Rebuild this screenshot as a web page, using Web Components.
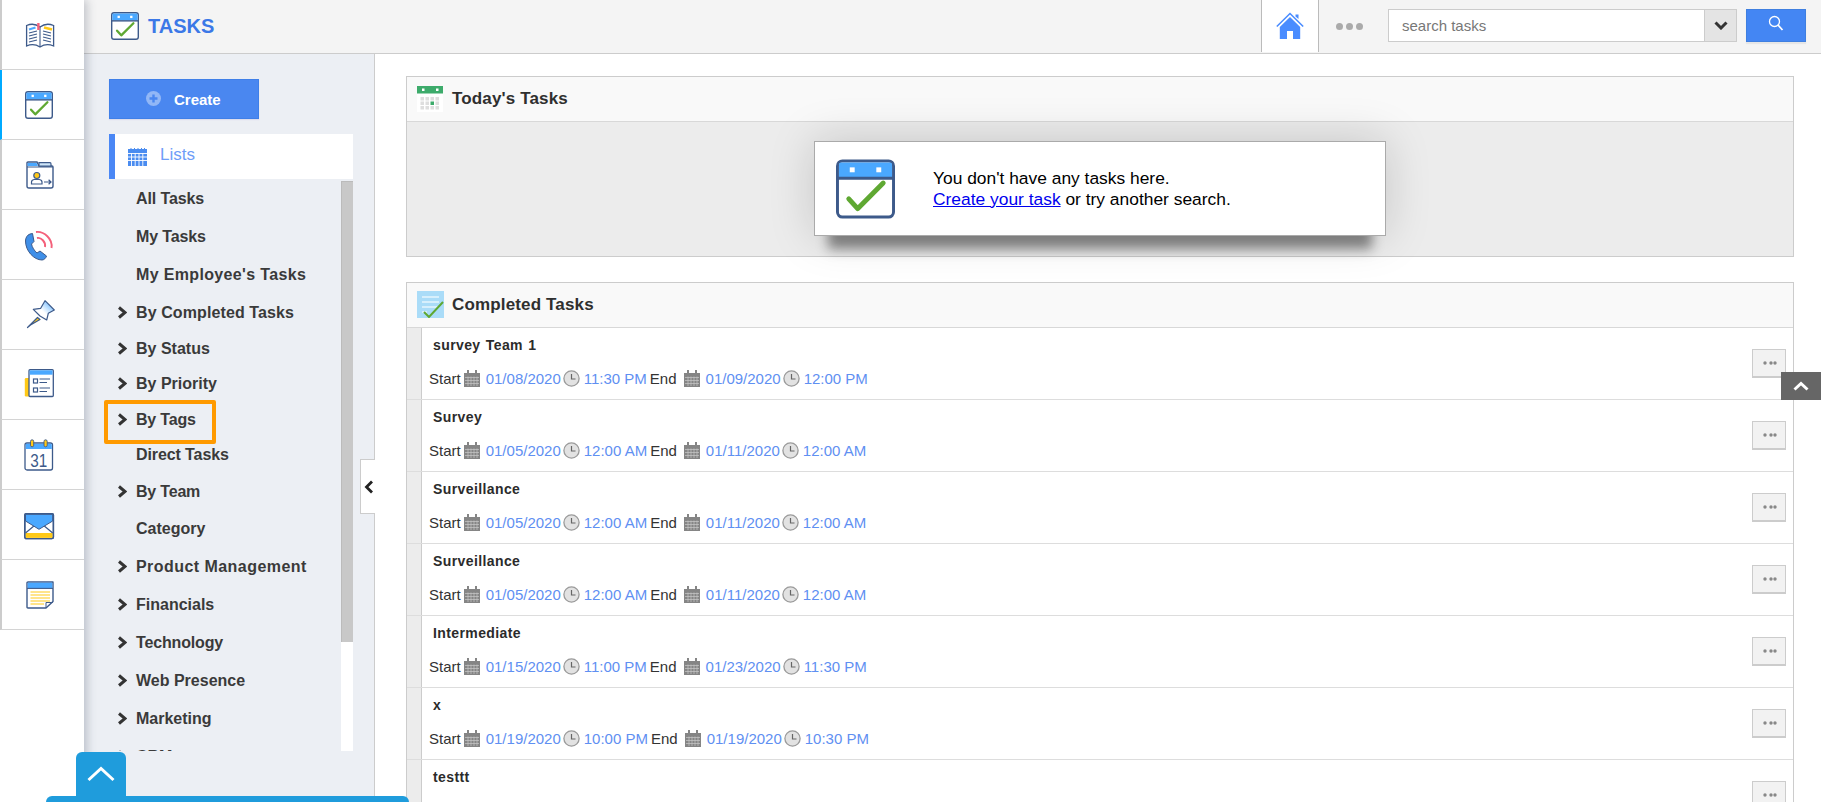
<!DOCTYPE html>
<html>
<head>
<meta charset="utf-8">
<title>Tasks</title>
<style>
  html, body { margin: 0; height: 100%; overflow: hidden; background: #fff; font-family: "Liberation Sans", Arial, sans-serif; }
</style>
</head>
<body>
<app-shell>
  <app-rail slot="rail">
    <rail-item icon="book"></rail-item>
    <rail-item icon="tasks" active></rail-item>
    <rail-item icon="folder"></rail-item>
    <rail-item icon="phone"></rail-item>
    <rail-item icon="pin"></rail-item>
    <rail-item icon="news"></rail-item>
    <rail-item icon="cal31"></rail-item>
    <rail-item icon="mail"></rail-item>
    <rail-item icon="note"></rail-item>
  </app-rail>
  <top-bar slot="top"></top-bar>
  <side-panel slot="side">
    <side-item h="37" ls="-.1">All Tasks</side-item>
    <side-item h="39" ls="-.15">My Tasks</side-item>
    <side-item h="38" ls=".35">My Employee's Tasks</side-item>
    <side-item h="37" ls=".1" arrow>By Completed Tasks</side-item>
    <side-item h="35" ls="0" arrow>By Status</side-item>
    <side-item h="36" ls="0" arrow>By Priority</side-item>
    <side-item h="35" ls="-.2" arrow>By Tags</side-item>
    <side-item h="36" ls="-.1">Direct Tasks</side-item>
    <side-item h="38" ls="-.2" arrow>By Team</side-item>
    <side-item h="36" ls="0">Category</side-item>
    <side-item h="39" ls=".45" arrow>Product Management</side-item>
    <side-item h="38" ls="0" arrow>Financials</side-item>
    <side-item h="38" ls="-.15" arrow>Technology</side-item>
    <side-item h="38" ls="0" arrow>Web Presence</side-item>
    <side-item h="38" ls="0" arrow>Marketing</side-item>
    <side-item h="38" ls="0" arrow>CRM</side-item>
  </side-panel>
  <div slot="main" style="padding:22px 27px 0 31px">
    <task-panel heading="Today's Tasks" icon="today">
      <empty-card>
        You don't have any tasks here.<br>
        <a href="#" style="color:#0000ee">Create your task</a> or try another search.
      </empty-card>
    </task-panel>
    <task-panel heading="Completed Tasks" icon="done" style="margin-top:25px" list>
      <task-row name="survey Team 1" d1="01/08/2020" t1="11:30 PM" d2="01/09/2020" t2="12:00 PM"></task-row>
      <task-row name="Survey" d1="01/05/2020" t1="12:00 AM" d2="01/11/2020" t2="12:00 AM"></task-row>
      <task-row name="Surveillance" d1="01/05/2020" t1="12:00 AM" d2="01/11/2020" t2="12:00 AM"></task-row>
      <task-row name="Surveillance" d1="01/05/2020" t1="12:00 AM" d2="01/11/2020" t2="12:00 AM"></task-row>
      <task-row name="Intermediate" d1="01/15/2020" t1="11:00 PM" d2="01/23/2020" t2="11:30 PM"></task-row>
      <task-row name="x" d1="01/19/2020" t1="10:00 PM" d2="01/19/2020" t2="10:30 PM"></task-row>
      <task-row name="testtt"></task-row>
    </task-panel>
  </div>
</app-shell>

<script>
const NAVY = "#3d5a8a", SKY = "#4aa8ff", SUN = "#ffc917", ROSE = "#f4607a", LEAF = "#5fa832";

const ICONS = {
  book: `<svg viewBox="0 0 32 32" width="32" height="32" fill="none" stroke="${NAVY}" stroke-width="1.1">
    <path d="M16 8C12 5 7 4.6 2.6 6.5V27C7 25 12 25.4 16 28C20 25.4 25 25 29.6 27V6.5C25 4.6 20 5 16 8Z" fill="#fff" stroke-width="1.3"/>
    <path d="M16 8V28"/>
    <path d="M5 10.5 11.5 8.5" stroke="${SKY}" stroke-width="2.2"/>
    <path d="M20 8.5 28 10.5" stroke="${SUN}" stroke-width="2.4"/>
    <path d="M5 14 13 12M5 17 13 15M5 20 13 18M5 23 13 21M19 12 27 14M19 15 27 17M19 18 27 20M19 21 27 23"/>
    <path d="M14.4 4V11" stroke="${ROSE}" stroke-width="2.4"/>
  </svg>`,
  tasks: `<svg viewBox="0 0 60 60" width="100%" height="100%">
    <rect x="1.5" y="1.5" width="57" height="57" rx="5" fill="#fff" stroke="${NAVY}" stroke-width="3"/>
    <path d="M3 18V5Q3 3 5 3H55Q57 3 57 5V18Z" fill="${SKY}"/>
    <path d="M2 19H58" stroke="${NAVY}" stroke-width="3"/>
    <rect x="14" y="8" width="5" height="5" fill="#fff"/><rect x="41" y="8" width="5" height="5" fill="#fff"/>
    <path d="M13 40 22 50 48 24" fill="none" stroke="${LEAF}" stroke-width="5" stroke-linecap="round" stroke-linejoin="round"/>
  </svg>`,
  folder: `<svg viewBox="0 0 32 32" width="32" height="32" fill="none" stroke="${NAVY}" stroke-width="1.2">
    <path d="M3 4Q3 3 4 3H13L15 7H28Q29 7 29 8V27Q29 29 27 29H5Q3 29 3 27Z" fill="#fff" stroke-width="1.4"/>
    <path d="M3.6 7V4H12.6L14 7Z" fill="${SKY}" stroke="none"/>
    <path d="M15 7V3.6H26Q27 3.6 27 5V7Z" fill="#cfe6f8"/>
    <path d="M3 8H29" stroke-width="1"/>
    <path d="M7.5 25V23Q7.5 21 10 20.5H15.5Q18 21 18 23V25Z" fill="#fff"/>
    <circle cx="12.8" cy="16.5" r="3" fill="${SUN}"/>
    <path d="M20 23H27M24.6 20.8 27 23 24.6 25.2"/>
  </svg>`,
  phone: `<svg viewBox="0 0 32 32" width="32" height="32" fill="none">
    <path d="M6 5C3 6 1.5 9 1.5 12C1.5 22 10 31 18 31C20 31 22 29 22.5 27L16 22L13 24C10.5 22 8 18 7.5 15L10 12.5L8.5 4.5Z" fill="#3f8fe8" stroke="${NAVY}" stroke-width="1"/>
    <path d="M12 3C20 2 29 10 27.5 19" stroke="${ROSE}" stroke-width="1.9"/>
    <path d="M13 9C17 8 22 13 21 18" stroke="${ROSE}" stroke-width="1.9"/>
  </svg>`,
  pin: `<svg viewBox="0 0 32 32" width="32" height="32" fill="none" stroke="${NAVY}" stroke-width="1.2" stroke-linejoin="round">
    <defs><linearGradient id="pinfill" x1="0" y1="1" x2="1" y2="0"><stop offset=".45" stop-color="#fff"/><stop offset="1" stop-color="${SKY}"/></linearGradient></defs>
    <path d="M13.5 18.5 3.5 28.5 6.5 26 16 20.5Z" fill="${SUN}"/>
    <path d="M21 1.7 30.3 11 24.3 14.3 22.7 21 16 17 9.3 10.3 16.7 9.3Z" fill="url(#pinfill)"/>
  </svg>`,
  news: `<svg viewBox="0 0 32 32" width="32" height="32" fill="none" stroke="${NAVY}" stroke-width="1.2">
    <rect x=".8" y="9" width="5" height="18.5" rx="1.2" fill="${SUN}" stroke="none"/>
    <rect x="5" y=".7" width="24.3" height="26.8" rx="1" fill="#fff" stroke-width="1.3"/>
    <rect x="5.6" y="1.3" width="23" height="4.4" fill="${SKY}" stroke="none"/>
    <rect x="9.5" y="10" width="4" height="4"/><rect x="9.5" y="19" width="4" height="4"/>
    <path d="M15.5 10H26M15.5 13.5H23M15.5 19H26M15.5 22.5H23"/>
  </svg>`,
  cal31: `<svg viewBox="0 0 32 32" width="32" height="32" fill="none">
    <rect x="1" y="4" width="27.5" height="27" rx="2" fill="#fff" stroke="${NAVY}" stroke-width="1.3"/>
    <path d="M1.7 10V5Q1.7 4.7 3 4.7H26.5Q27.8 4.7 27.8 6V10Z" fill="${SKY}"/>
    <rect x="6.5" y=".8" width="3.2" height="7" rx="1.6" fill="${SUN}" stroke="${NAVY}" stroke-width=".9"/>
    <rect x="20" y=".8" width="3.2" height="7" rx="1.6" fill="${SUN}" stroke="${NAVY}" stroke-width=".9"/>
    <text x="6.3" y="27.8" textLength="17" lengthAdjust="spacingAndGlyphs" font-family="Liberation Sans" font-size="18" fill="${NAVY}">31</text>
  </svg>`,
  mail: `<svg viewBox="0 0 32 32" width="32" height="32" fill="none" stroke="${NAVY}">
    <rect x=".8" y="4.6" width="28.6" height="25" rx="1.5" fill="#fff" stroke-width="1.4"/>
    <path d="M1.5 24H28.7V28.9H1.5Z" fill="${SUN}" stroke="none"/>
    <path d="M1.5 24 10.5 16.5M28.7 24 19.7 16.5" stroke-width="1.2"/>
    <path d="M1.5 5.3H28.7V12L15 20.3 1.5 12Z" fill="${SKY}" stroke-width="1"/>
    <rect x=".8" y="4.6" width="28.6" height="25" rx="1.5" stroke-width="1.4"/>
  </svg>`,
  note: `<svg viewBox="0 0 32 32" width="32" height="32" fill="none" stroke="${NAVY}">
    <path d="M3 4Q3 3 4 3H29V22.5L22 29H4Q3 29 3 28Z" fill="#fff" stroke-width="1.4" stroke-linejoin="round"/>
    <path d="M3.7 3.7H28.3V9H3.7Z" fill="${SKY}" stroke="none"/>
    <path d="M3 9.4H29" stroke-width="1.1"/>
    <path d="M6.5 13H26M6.5 16H26M6.5 19H26M6.5 22H26M6.5 25H20" stroke="${SUN}" stroke-width="1.2"/>
    <path d="M22 29V23.5H29" stroke-width="1"/>
  </svg>`,
  today: `<svg viewBox="0 0 26 26" width="26" height="26">
    <rect width="26" height="26" fill="#fff"/>
    <rect width="26" height="7.5" fill="#3dab6b"/>
    <rect x="5" y="2.5" width="2.5" height="2.5" fill="#fff"/><rect x="19" y="2.5" width="2.5" height="2.5" fill="#fff"/>
    <g fill="#dedede">
      <rect x="3.5" y="11" width="3.5" height="3.5"/><rect x="8.5" y="11" width="3.5" height="3.5"/><rect x="13.5" y="11" width="3.5" height="3.5"/><rect x="18.5" y="11" width="3.5" height="3.5"/>
      <rect x="3.5" y="15.5" width="3.5" height="3.5"/><rect x="8.5" y="15.5" width="3.5" height="3.5"/><rect x="18.5" y="15.5" width="3.5" height="3.5"/>
      <rect x="3.5" y="20" width="3.5" height="3.5"/><rect x="8.5" y="20" width="3.5" height="3.5"/><rect x="13.5" y="20" width="3.5" height="3.5"/><rect x="18.5" y="20" width="3.5" height="3.5"/>
    </g>
    <rect x="13.5" y="15.5" width="3.5" height="3.5" fill="#3dab6b"/>
  </svg>`,
  done: `<svg viewBox="0 0 27 27" width="27" height="27">
    <rect width="27" height="27" fill="#aadcf8"/>
    <path d="M5 6H22M5 11H22M5 16H22M5 21H10" stroke="#e6f5fd" stroke-width="1.4"/>
    <path d="M7 21 12 26 26 11" fill="none" stroke="${LEAF}" stroke-width="2"/>
  </svg>`,
  home: `<svg viewBox="0 0 28 28" width="28" height="28" fill="#4a8cff">
    <path d="M.8 14.5 14 1.5 27.2 14.5" fill="none" stroke="#4a8cff" stroke-width="1.6"/>
    <path d="M19.5 2.5H22.5V7L19.5 4.5Z"/>
    <path d="M3.8 15 14 5 24.2 15V27H17V19H11V27H3.8Z"/>
  </svg>`,
  lists: `<svg viewBox="0 0 19 18" width="19" height="18">
    <rect y="1" width="19" height="17" fill="#4a8cf0"/>
    <path d="M3 0V2M6.5 0V2M10 0V2M13.5 0V2M16.5 0V2" stroke="#4a8cf0"/>
    <path d="M0 5.5H19M0 9H19M0 12.5H19M3.5 5V18M7.2 5V18M11 5V18M14.8 5V18" stroke="#fff" stroke-width=".9"/>
  </svg>`,
  cal: `<svg viewBox="0 0 16 17" width="16" height="17">
    <rect y="3" width="16" height="14" fill="#858585"/>
    <rect x="3" y="0" width="2" height="5" fill="#858585"/><rect x="11" y="0" width="2" height="5" fill="#858585"/>
    <path d="M1 7.5H15M1 10.5H15M1 13.5H15M4 6.5V16M7 6.5V16M10 6.5V16M13 6.5V16" stroke="#c9c9c9" stroke-width=".7"/>
  </svg>`,
  clock: `<svg viewBox="0 0 17 17" width="17" height="17" fill="none">
    <circle cx="8.5" cy="8.5" r="7.6" fill="#e2e2e2" stroke="#9a9a9a" stroke-width="1.3"/>
    <path d="M8.5 4V9H12.5" stroke="#666" stroke-width="1.2"/>
  </svg>`,
  chevRight: `<svg viewBox="0 0 10 13" width="10" height="13" fill="none">
    <path d="M2 1.5 8 6.5 2 11.5" stroke="#333" stroke-width="3"/>
  </svg>`
};

class AppIcon extends HTMLElement {
  connectedCallback() {
    this.attachShadow({ mode: "open" }).innerHTML = `
      <style>:host { display: block; line-height: 0; flex: none; }</style>
      ${ICONS[this.getAttribute("name")]}`;
  }
}
customElements.define("app-icon", AppIcon);

class AppShell extends HTMLElement {
  constructor() {
    super();
    this.attachShadow({ mode: "open" }).innerHTML = `
      <style>
        :host { display: grid; grid-template-columns: 84px 1fr; grid-template-rows: 54px 1fr; height: 802px; position: relative; overflow: hidden; }
        .rail { grid-row: 1 / 3; position: relative; z-index: 3; }
        .top { grid-column: 2; position: relative; z-index: 1; }
        .body { grid-column: 2; display: flex; min-height: 0; }
        .main { flex: 1; min-width: 0; overflow: hidden; }
        .to-top { position: absolute; left: 1781px; top: 372px; width: 40px; height: 28px; background: #666; display: flex; align-items: center; justify-content: center; z-index: 4; }
        .dock { position: absolute; left: 46px; top: 796px; width: 363px; height: 6px; background: #1f9cdc; border-radius: 6px 6px 0 0; z-index: 5; }
        .dock-tab { position: absolute; left: 76px; top: 752px; width: 50px; height: 44px; background: #1f9cdc; border-radius: 6px 6px 0 0; z-index: 5; display: flex; align-items: center; justify-content: center; }
      </style>
      <div class="rail"><slot name="rail"></slot></div>
      <div class="top"><slot name="top"></slot></div>
      <div class="body">
        <slot name="side"></slot>
        <div class="main"><slot name="main"></slot></div>
      </div>
      <div class="to-top"><svg viewBox="0 0 16 10" width="16" height="10" fill="none"><path d="M1.5 8.5 8 2.5 14.5 8.5" stroke="#fff" stroke-width="3"/></svg></div>
      <div class="dock-tab"><svg viewBox="0 0 28 16" width="28" height="16" fill="none"><path d="M1.5 14 14 2.5 26.5 14" stroke="#fff" stroke-width="3"/></svg></div>
      <div class="dock"></div>`;
  }
}
customElements.define("app-shell", AppShell);

class AppRail extends HTMLElement {
  constructor() {
    super();
    this.attachShadow({ mode: "open" }).innerHTML = `
      <style>:host { display: block; width: 84px; height: 802px; background: #fff; box-shadow: 3px 0 9px rgba(60,70,90,.28); }</style>
      <slot></slot>`;
  }
}
customElements.define("app-rail", AppRail);

class RailItem extends HTMLElement {
  connectedCallback() {
    const color = this.hasAttribute("active") ? "#00aaff" : "#cccccc";
    this.attachShadow({ mode: "open" }).innerHTML = `
      <style>
        :host { display: flex; box-sizing: border-box; height: 70px; align-items: center; justify-content: center;
                border-left: 2px solid ${color}; border-bottom: 1px solid #d4d4d4; padding: 1px 6px 0 0; background: #fff; }
        app-icon { width: 32px; height: 32px; }
        .tasks { width: 28px; height: 28px; margin: 0 1px 0 -1px; }
      </style>
      <app-icon name="${this.getAttribute("icon")}" class="${this.getAttribute("icon")}"></app-icon>`;
  }
}
customElements.define("rail-item", RailItem);

class TopBar extends HTMLElement {
  constructor() {
    super();
    this.attachShadow({ mode: "open" }).innerHTML = `
      <style>
        :host { display: flex; box-sizing: border-box; height: 54px; background: #f4f4f4; border-bottom: 1px solid #ccc; padding-left: 27px; }
        .logo { width: 28px; height: 28px; align-self: center; margin-top: -1px; }
        h1 { margin: 0 0 0 9px; align-self: center; font-size: 20px; font-weight: bold; color: #3b78e7; margin-top: -1px; }
        .home { margin-left: auto; width: 58px; height: 52px; box-sizing: border-box; background: #fff; border: solid #bbb; border-width: 0 1px; display: flex; align-items: center; justify-content: center; padding-bottom: 1px; }
        .dots { margin: -1px 25px 0 17px; display: flex; gap: 3px; align-items: center; }
        .dots i { width: 7px; height: 7px; border-radius: 50%; background: #aaa; }
        .search { box-sizing: border-box; width: 349px; height: 33px; margin-top: 9px; background: #fff; border: 1px solid #ccc; display: flex; }
        .search span { flex: 1; padding-left: 13px; font-size: 15px; line-height: 32px; color: #777; }
        .drop { width: 31px; background: #e4e4e4; border-left: 1px solid #ccc; display: flex; align-items: center; justify-content: center; }
        .go { box-sizing: border-box; width: 60px; height: 33px; margin: 9px 15px 0 9px; background: #4486f3; border: 1px solid #3f7fe0; box-shadow: 0 2px 1px #e6e6e6; display: flex; align-items: center; justify-content: center; padding-bottom: 5px; }
      </style>
      <app-icon class="logo" name="tasks"></app-icon>
      <h1>TASKS</h1>
      <div class="home"><app-icon name="home"></app-icon></div>
      <div class="dots"><i></i><i></i><i></i></div>
      <div class="search">
        <span>search tasks</span>
        <div class="drop"><svg viewBox="0 0 14 9" width="14" height="9" fill="none"><path d="M1.5 1.5 7 7 12.5 1.5" stroke="#333" stroke-width="3"/></svg></div>
      </div>
      <div class="go"><svg viewBox="0 0 16 16" width="16" height="16" fill="none" stroke="#fff"><circle cx="6.5" cy="6.5" r="5" stroke-width="1.3"/><path d="M10 10 14.5 15" stroke-width="1.8"/></svg></div>`;
  }
}
customElements.define("top-bar", TopBar);

class SidePanel extends HTMLElement {
  constructor() {
    super();
    this.attachShadow({ mode: "open" }).innerHTML = `
      <style>
        :host { display: block; flex: none; box-sizing: border-box; width: 291px; height: 748px; position: relative; background: #eceff4; border-right: 1px solid #ccc; padding: 25px 0 0 25px; }
        .create { box-sizing: border-box; width: 150px; height: 40px; background: #4a87f0; border: 1px solid #3f7fe8; color: #fff; font-weight: bold; font-size: 15px; display: flex; align-items: center; padding: 1px 0 0 36px; gap: 13px; box-shadow: 0 1px 1px #dde; }
        .create svg { margin-top: -2px; }
        .lists { box-sizing: border-box; width: 244px; height: 45px; margin-top: 15px; background: #fff; border-left: 6px solid #4a87f5; display: flex; align-items: center; padding: 0 0 3px 13px; font-size: 17px; color: #6f9df8; gap: 13px; }
        .lists app-icon { margin-top: 3px; }
        .wrap { width: 244px; height: 570px; margin-top: 2px; display: flex; overflow: hidden; }
        .items { flex: 1; min-width: 0; margin-top: -1px; }
        .scroll { width: 12px; height: 570px; background: #fff; flex: none; }
        .scroll div { height: 461px; background: #c8c8c8; border: solid #bbb; border-width: 1px 0 0 1px; box-sizing: border-box; }
        .mark { position: absolute; left: 20px; top: 346px; width: 112px; height: 44px; box-sizing: border-box; border: 4px solid #ff9a00; border-radius: 2px; }
        .fold { position: absolute; left: 276px; top: 405px; width: 15px; height: 55px; box-sizing: border-box; background: #fff; border: 1px solid #ccc; border-right: 0; display: flex; align-items: center; justify-content: center; padding-left: 2px; }
      </style>
      <div class="create">
        <svg viewBox="0 0 15 15" width="15" height="15"><circle cx="7.5" cy="7.5" r="7.5" fill="#fff" opacity=".4"/><path d="M7.5 3.5V11.5M3.5 7.5H11.5" stroke="#4a87f0" stroke-width="2.4"/></svg>
        <span>Create</span>
      </div>
      <div class="lists"><app-icon name="lists"></app-icon><span>Lists</span></div>
      <div class="wrap">
        <div class="items"><slot></slot></div>
        <div class="scroll"><div></div></div>
      </div>
      <div class="mark"></div>
      <div class="fold"><svg viewBox="0 0 10 14" width="10" height="14" fill="none"><path d="M8 1.5 2.5 7 8 12.5" stroke="#222" stroke-width="2.8"/></svg></div>`;
  }
}
customElements.define("side-panel", SidePanel);

class SideItem extends HTMLElement {
  constructor() {
    super();
    const root = this.attachShadow({ mode: "open" });
    root.innerHTML = `
      <style>
        :host { display: flex; align-items: center; position: relative; padding-left: 27px; font-size: 16px; font-weight: bold; color: #3a3a3a; white-space: nowrap; }
        app-icon { position: absolute; left: 8px; top: 50%; margin-top: -7px; }
      </style>
      <slot></slot>`;
  }
  connectedCallback() {
    this.style.height = this.getAttribute("h") + "px";
    this.style.letterSpacing = this.getAttribute("ls") + "px";
    if (this.hasAttribute("arrow")) {
      const icon = document.createElement("app-icon");
      icon.setAttribute("name", "chevRight");
      this.shadowRoot.appendChild(icon);
    }
  }
}
customElements.define("side-item", SideItem);

class TaskPanel extends HTMLElement {
  connectedCallback() {
    const list = this.hasAttribute("list");
    this.attachShadow({ mode: "open" }).innerHTML = `
      <style>
        :host { display: block; border: 1px solid #ccc; background: #fff; }
        header { box-sizing: border-box; height: 45px; background: #f9f9f9; border-bottom: 1px solid #d8d8d8; display: flex; align-items: center; padding: 0 0 1px 10px; }
        .ico { width: 35px; flex: none; }
        h2 { margin: 0; font-size: 17px; font-weight: bold; color: #2f2f2f; letter-spacing: .15px; }
        .body { ${list ? "" : "height: 134px; background: #ececec; position: relative;"} }
      </style>
      <header>
        <div class="ico"><app-icon name="${this.getAttribute("icon")}"></app-icon></div>
        <h2>${this.getAttribute("heading")}</h2>
      </header>
      <div class="body"><slot></slot></div>`;
  }
}
customElements.define("task-panel", TaskPanel);

class EmptyCard extends HTMLElement {
  constructor() {
    super();
    this.attachShadow({ mode: "open" }).innerHTML = `
      <style>
        :host { display: flex; box-sizing: border-box; width: 572px; height: 95px; position: relative; top: 19px; margin: 0 auto; align-items: center; background: #fff; border: 1px solid #aaa; padding-left: 21px; font-size: 17.4px; line-height: 21px; color: #000;
                box-shadow: 0 0 45px rgba(0,0,0,.17), 0 27px 11px -14px rgba(0,0,0,.42); }
        app-icon { width: 59px; height: 60px; margin-right: 38px; }
      </style>
      <app-icon name="tasks"></app-icon>
      <div><slot></slot></div>`;
  }
}
customElements.define("empty-card", EmptyCard);

class TaskRow extends HTMLElement {
  connectedCallback() {
    const a = n => this.getAttribute(n);
    const meta = !a("d1") ? "" : `
        <div class="meta">
          <span>Start</span>
          <app-icon name="cal" style="margin:0 6px 0 3px"></app-icon>
          <b>${a("d1")}</b>
          <app-icon name="clock" style="margin:0 4px 0 2px"></app-icon>
          <b>${a("t1")}</b>
          <span style="margin-left:3px">End</span>
          <app-icon name="cal" style="margin:0 6px 0 7px"></app-icon>
          <b>${a("d2")}</b>
          <app-icon name="clock" style="margin:0 4px 0 2px"></app-icon>
          <b>${a("t2")}</b>
        </div>`;
    this.attachShadow({ mode: "open" }).innerHTML = `
      <style>
        :host { display: flex; box-sizing: border-box; height: 72px; border-bottom: 1px solid #ddd; position: relative; }
        .gut { width: 14px; background: #ececec; border-right: 1px solid #ccc; flex: none; }
        .col { flex: 1; min-width: 0; }
        .name { margin: 8px 0 0 11px; height: 18px; line-height: 18px; font-size: 14px; font-weight: bold; letter-spacing: .4px; word-spacing: 1px; color: #2b2b2b; }
        .meta { margin: 15px 0 0 7px; height: 18px; display: flex; align-items: center; font-size: 15px; color: #333; white-space: nowrap; }
        .meta b { font-weight: normal; color: #5f90f2; }
        .more { position: absolute; right: 7px; top: 21px; width: 34px; height: 29px; box-sizing: border-box; background: #f2f2f2; border: 1px solid #ccc; border-bottom-width: 2px; display: flex; align-items: center; justify-content: center; padding-left: 2px; }
      </style>
      <div class="gut"></div>
      <div class="col">
        <div class="name">${a("name")}</div>${meta}
      </div>
      <div class="more"><svg viewBox="0 0 14 4" width="14" height="4" fill="#888"><circle cx="2" cy="2" r="1.7"/><circle cx="8" cy="2" r="1.7"/><circle cx="12" cy="2" r="1.7"/></svg></div>`;
  }
}
customElements.define("task-row", TaskRow);
</script>
</body>
</html>
